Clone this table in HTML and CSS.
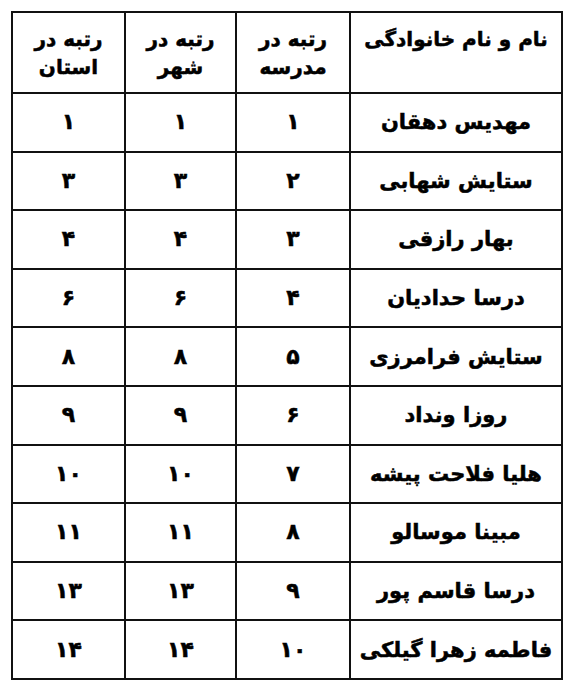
FILE: index.html
```html
<!DOCTYPE html>
<html lang="fa">
<head>
<meta charset="utf-8">
<link rel="stylesheet" href="styles.css">
</head>
<body>
<div class="page">
<table class="ranks" dir="rtl">
  <colgroup>
    <col class="c-name"><col class="c-school"><col class="c-city"><col class="c-prov">
  </colgroup>
  <thead>
    <tr>
      <th>نام و نام خانوادگی</th>
      <th>رتبه در<br>مدرسه</th>
      <th>رتبه در<br>شهر</th>
      <th>رتبه در<br>استان</th>
    </tr>
  </thead>
  <tbody>
    <tr><td class="name">مهدیس دهقان</td><td>۱</td><td>۱</td><td>۱</td></tr>
    <tr><td class="name">ستایش شهابی</td><td>۲</td><td>۳</td><td>۳</td></tr>
    <tr><td class="name">بهار رازقی</td><td>۳</td><td>۴</td><td>۴</td></tr>
    <tr><td class="name">درسا حدادیان</td><td>۴</td><td>۶</td><td>۶</td></tr>
    <tr><td class="name">ستایش فرامرزی</td><td>۵</td><td>۸</td><td>۸</td></tr>
    <tr><td class="name">روزا ونداد</td><td>۶</td><td>۹</td><td>۹</td></tr>
    <tr><td class="name">هلیا فلاحت پیشه</td><td>۷</td><td>۱۰</td><td>۱۰</td></tr>
    <tr><td class="name">مبینا موسالو</td><td>۸</td><td>۱۱</td><td>۱۱</td></tr>
    <tr><td class="name">درسا قاسم پور</td><td>۹</td><td>۱۳</td><td>۱۳</td></tr>
    <tr><td class="name">فاطمه زهرا گیلکی</td><td>۱۰</td><td>۱۴</td><td>۱۴</td></tr>
  </tbody>
</table>
</div>
</body>
</html>
```
FILE: styles.css
```css
html, body {
  margin: 0;
  padding: 0;
  background: #ffffff;
}
.page {
  direction: ltr;
  padding: 11px 0 0 11px;
}
.ranks {
  direction: rtl;
  border-collapse: collapse;
  table-layout: fixed;
  width: 550px;
  font-family: "DejaVu Sans", sans-serif;
  font-weight: bold;
  color: #000;
  -webkit-text-stroke: 0.5px #000;
}
.c-name { width: 212px; }
.c-school { width: 114px; }
.c-city { width: 111px; }
.c-prov { width: 113px; }
.ranks th, .ranks td {
  border: 2px solid #111;
  text-align: center;
  padding: 0;
  box-sizing: border-box;
}
.ranks th {
  height: 81px;
  vertical-align: top;
  font-size: 20px;
  line-height: 28px;
  padding-top: 12px;
}
.ranks td {
  height: 58.6px;
  vertical-align: middle;
  font-size: 22px;
  line-height: 26px;
}
.ranks td.name {
  font-size: 21px;
}
```
